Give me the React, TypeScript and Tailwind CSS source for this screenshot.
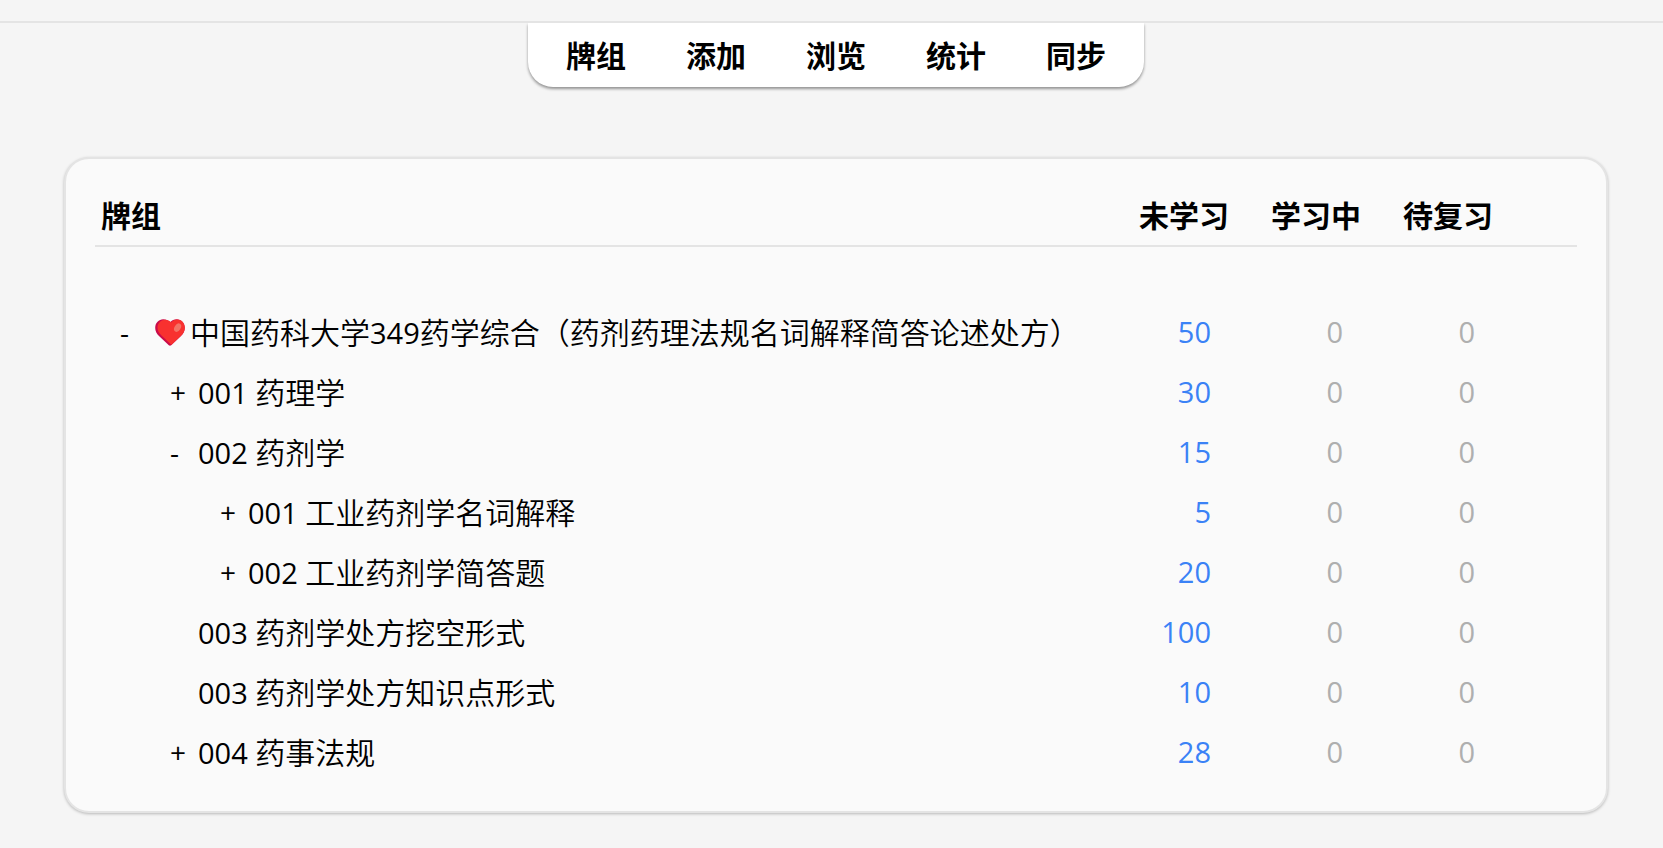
const navItems = ["牌组", "添加", "浏览", "统计", "同步"];

type Deck = {
  id: number;
  level: 0 | 1 | 2;
  toggle?: "+" | "-";
  name: string;
  heart?: boolean;
  counts: number[];
};

const decks: Deck[] = [
  {
    id: 1,
    level: 0,
    toggle: "-",
    name: "中国药科大学349药学综合（药剂药理法规名词解释简答论述处方）",
    heart: true,
    counts: [50, 0, 0],
  },
  { id: 2, level: 1, toggle: "+", name: "001 药理学", counts: [30, 0, 0] },
  { id: 3, level: 1, toggle: "-", name: "002 药剂学", counts: [15, 0, 0] },
  { id: 4, level: 2, toggle: "+", name: "001 工业药剂学名词解释", counts: [5, 0, 0] },
  { id: 5, level: 2, toggle: "+", name: "002 工业药剂学简答题", counts: [20, 0, 0] },
  { id: 6, level: 1, name: "003 药剂学处方挖空形式", counts: [100, 0, 0] },
  { id: 7, level: 1, name: "003 药剂学处方知识点形式", counts: [10, 0, 0] },
  { id: 8, level: 1, toggle: "+", name: "004 药事法规", counts: [28, 0, 0] },
];

const indent = ["pl-[25px]", "pl-[75px]", "pl-[125px]"];

function Heart() {
  return (
    <svg viewBox="0 0 30 27" className="ml-[7px] mr-[5px] h-[27px] w-[30px] shrink-0" aria-hidden="true">
      <path
        d="M15 3.6C13.2 1.4 10.8.3 8.2.3 3.8.3.2 3.9.2 8.7c0 3.2 1.3 6 3.8 8.4l9.8 9.1c.7.6 1.7.6 2.4 0l9.8-9.1c2.5-2.4 3.8-5.2 3.8-8.4 0-4.8-3.6-8.4-8-8.4-2.6 0-5 1.1-6.8 3.3Z"
        fill="#CA0B4A"
      />
      <path
        d="M16.2 3.4C14.8 1.6 12.6.7 10.3.7 6 .7 2.5 4.2 2.5 8.5c0 3.1 1.4 5.5 3.7 7.7l9.7 9.3c.3.3.6.3.9 0l9.2-8.7c2.5-2.4 3.8-5 3.8-8.1C29.8 4 26.3.5 22.1.5c-2.4 0-4.5 1-5.9 2.9Z"
        fill="#F8312F"
      />
      <ellipse cx="22.6" cy="8.6" rx="3" ry="4.6" transform="rotate(32 22.6 8.6)" fill="#F37366" />
    </svg>
  );
}

// digits are set in the latin face, the rest in the CJK one
function DeckName({ name }: { name: string }) {
  return (
    <span className="whitespace-pre font-[350]">
      {name.split(/(\d+ ?)/).map((part, i) =>
        i % 2 ? (
          <span key={i} className="font-['Open_Sans',sans-serif] text-[29px] font-normal">
            {part}
          </span>
        ) : (
          part
        )
      )}
    </span>
  );
}

export default function App() {
  return (
    <div className="min-h-screen bg-[#f5f5f5] pb-9 pl-16 pr-[55px] font-['Noto_Sans_CJK_SC',sans-serif] text-[30px] leading-[60px] text-black">
      <header className="-ml-16 -mr-[55px] h-[23px] border-b-2 border-[#e4e4e4]" />

      <nav className="mx-auto flex h-16 w-fit rounded-b-[25px] bg-white px-2 shadow-[0_2px_3px_rgba(0,0,0,0.4)] [clip-path:inset(0_-8px_-8px)]">
        {navItems.map((item) => (
          <a key={item} href="#" className="px-[30px] pt-px font-bold">
            {item}
          </a>
        ))}
      </nav>

      <main className="mt-[70px] rounded-[25px] border-2 border-[#e4e4e4] bg-[#fafafa] px-[29px] pb-[29px] pt-7 shadow-[0_1px_3px_rgba(0,0,0,0.25)]">
        <table className="w-full table-fixed border-collapse">
          <colgroup>
            <col />
            <col className="w-[132px]" />
            <col className="w-[132px]" />
            <col className="w-[132px]" />
            <col className="w-[63px]" />
          </colgroup>
          <thead>
            <tr className="h-[59px] border-b-2 border-[#e4e4e4] leading-[52px]">
              <th className="pb-1 pl-1.5 text-left">牌组</th>
              <th className="pb-1">未学习</th>
              <th className="pb-1">学习中</th>
              <th className="pb-1">待复习</th>
              <td />
            </tr>
          </thead>
          <tbody>
            <tr className="h-14">
              <td colSpan={5} />
            </tr>
            {decks.map((deck) => (
              <tr key={deck.id} className="h-[60px]">
                <td className={indent[deck.level]}>
                  <div className="flex h-[60px] items-center">
                    {deck.toggle ? (
                      <button
                        type="button"
                        className="w-7 text-left font-['Open_Sans',sans-serif] text-[28px]"
                      >
                        {deck.toggle}
                      </button>
                    ) : (
                      <span className="w-7" />
                    )}
                    <a href="#" className="flex items-center">
                      {deck.heart && <Heart />}
                      <DeckName name={deck.name} />
                    </a>
                  </div>
                </td>
                {deck.counts.map((count, i) => (
                  <td
                    key={i}
                    className={`pr-[39px] text-right font-['Open_Sans',sans-serif] text-[29px] ${
                      count ? "text-[#3b82f6]" : "text-[#afafaf]"
                    }`}
                  >
                    {count}
                  </td>
                ))}
                <td />
              </tr>
            ))}
          </tbody>
        </table>
      </main>
    </div>
  );
}
